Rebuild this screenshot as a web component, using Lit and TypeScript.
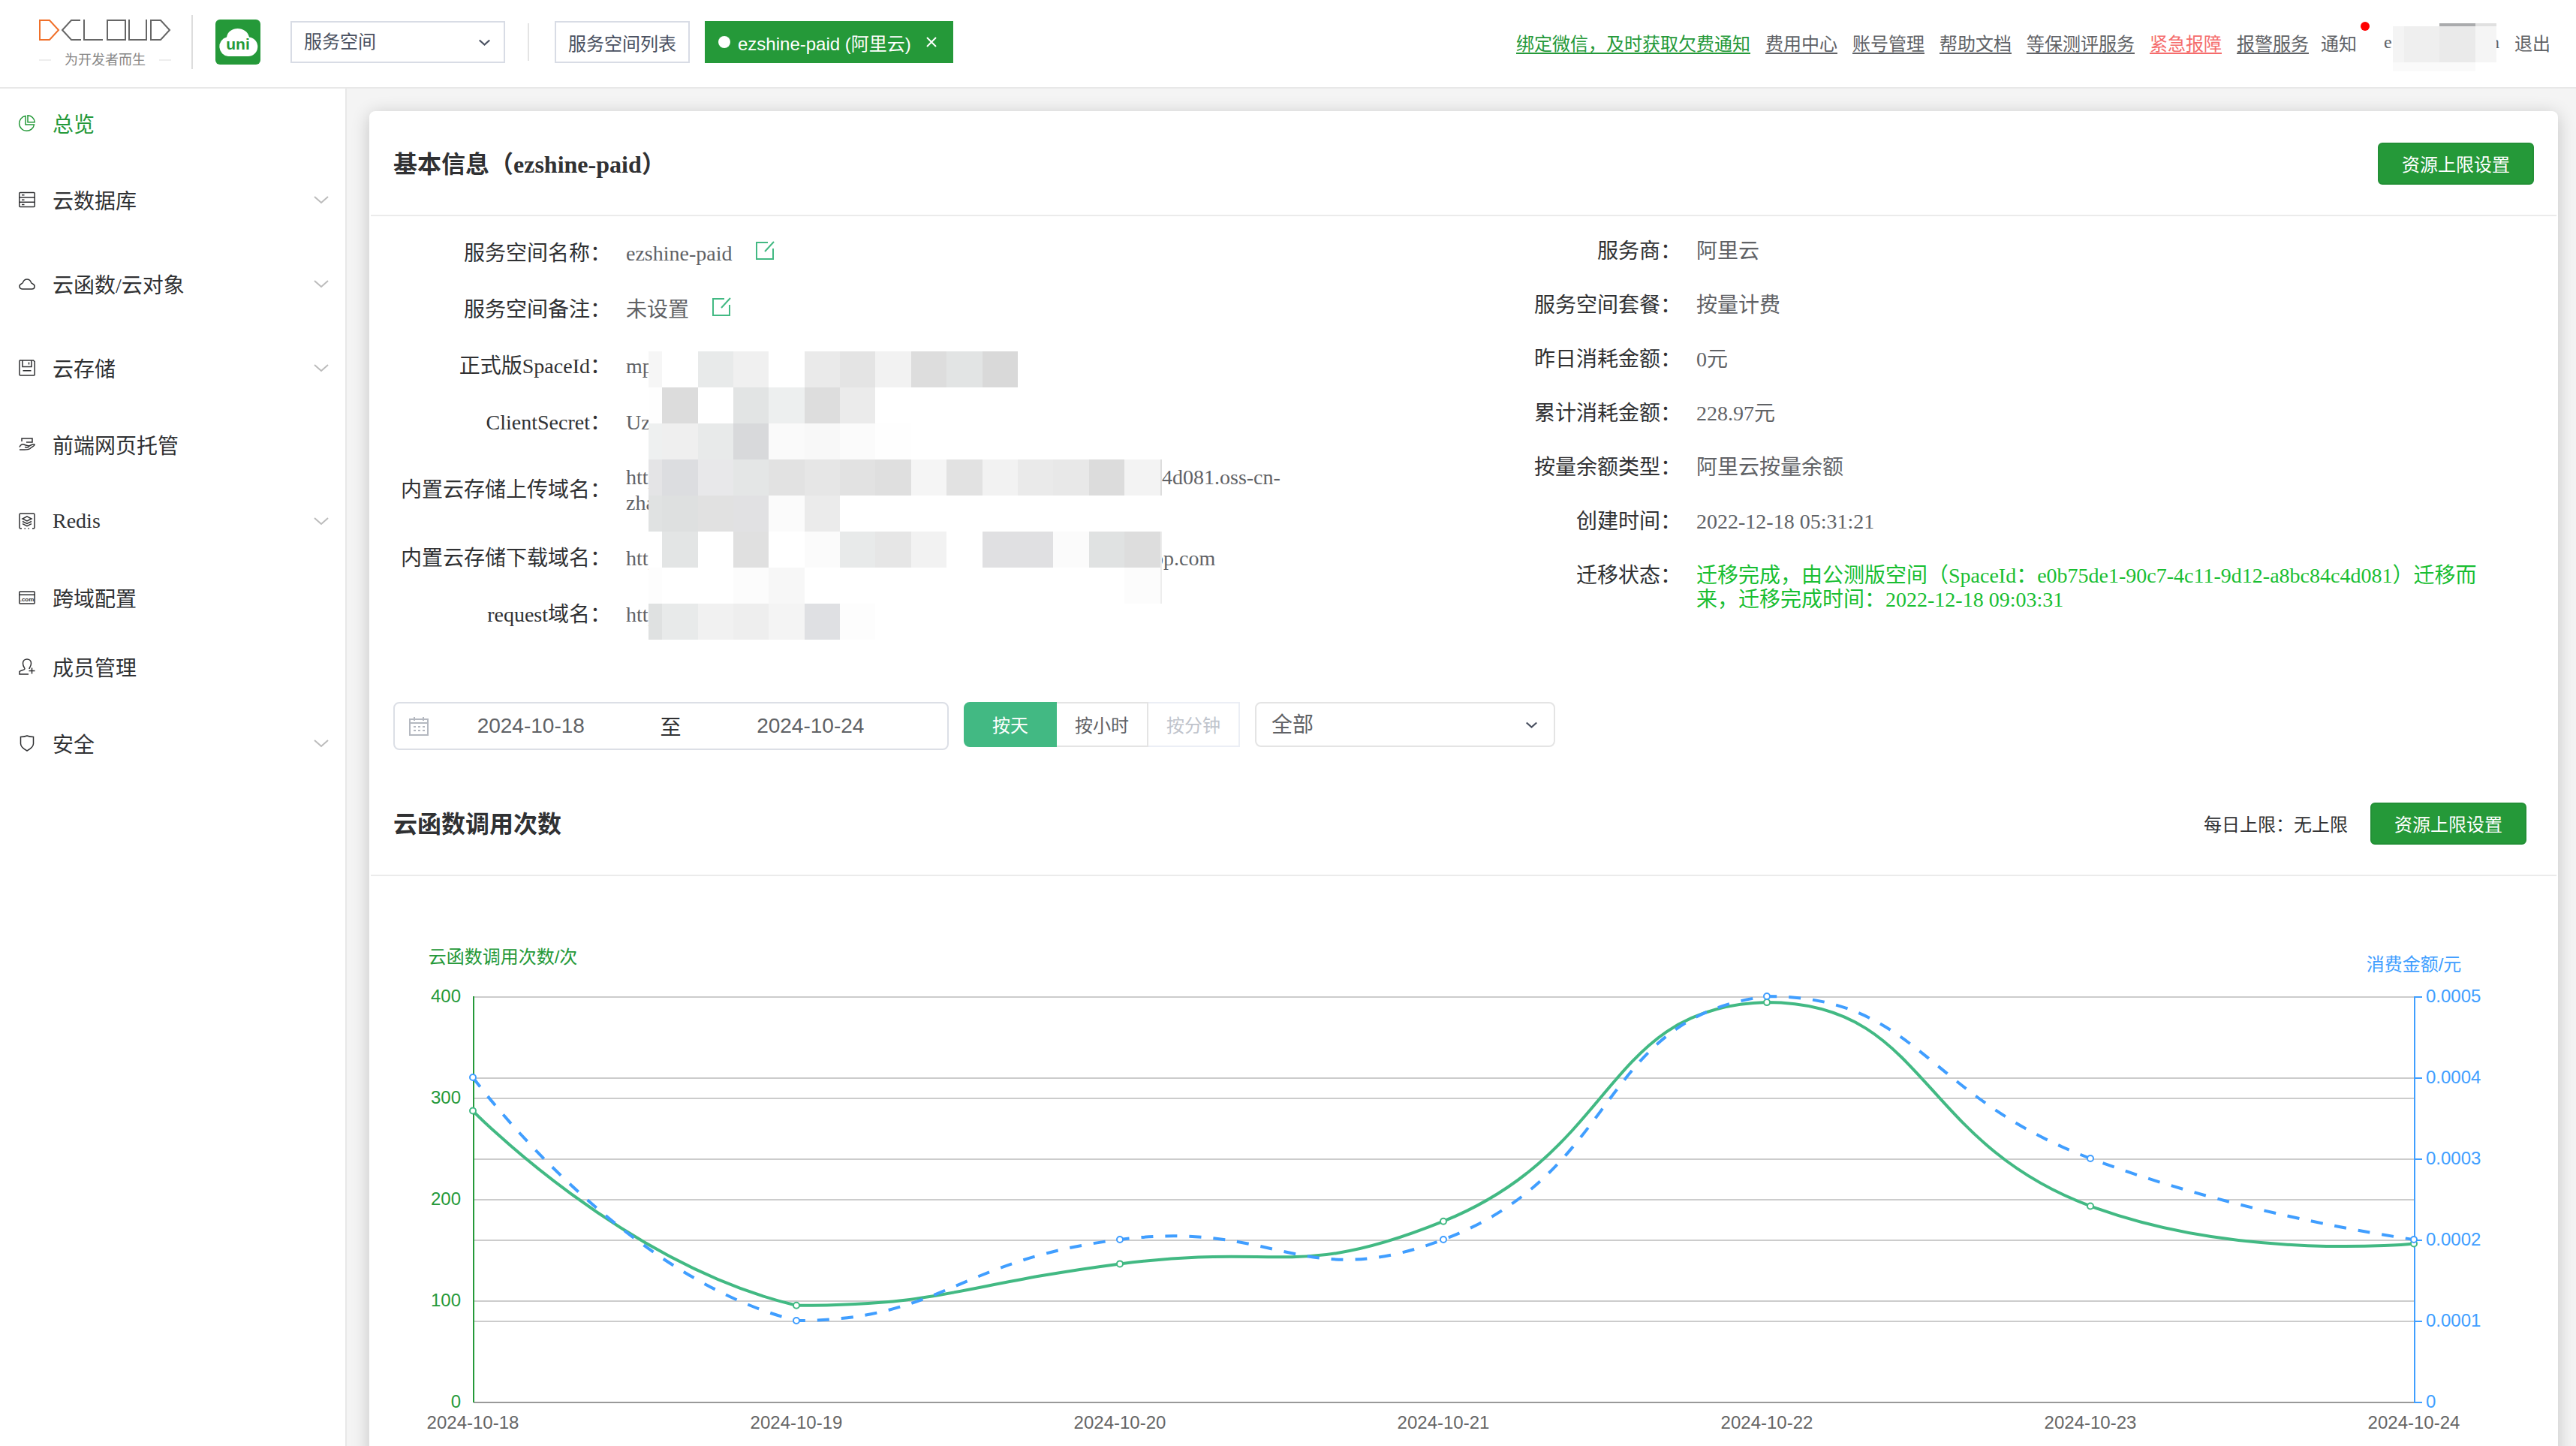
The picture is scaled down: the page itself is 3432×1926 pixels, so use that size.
import { LitElement, html, svg, css, nothing, type TemplateResult } from "lit";
import { customElement, state } from "lit/decorators.js";
import { classMap } from "lit/directives/class-map.js";
import { styleMap } from "lit/directives/style-map.js";

/* ---------- icons ---------- */

const icons: Record<string, TemplateResult> = {
  overview: svg`<path d="M9 1.500A10 10 0 1 0 20.500 13H9z"/><path d="M12 .8v9h9.200A9.300 9.300 0 0 0 12 .8z"/>`,
  database: svg`<rect x=".8" y="1.500" width="20.400" height="19" rx="1"/><path d="M1 8h20M1 14.300h20M4 4.800h3.500M4 11.200h3.500M4 17.500h3.500"/>`,
  cloud: svg`<path d="M5 18h12.500c4.300 0 4.800-5.300 1-7-.8-.5-1.500-.7-2-1.700-2-5.600-9-5.600-11 0-.4 1-1.200 1.200-2 1.700-3.700 1.700-3.200 7 1.500 7z"/>`,
  storage: svg`<path d="M2.500 1h17l1.700 1.700V20a1 1 0 0 1-1 1H2a1 1 0 0 1-1-1V2a1 1 0 0 1 1.500-1z"/><path d="M5 1v8.500h12V1M13.500 3.500v3M5.500 14.700h11"/>`,
  hosting: svg`<path d="M4 7V3h14v5h-8"/><path d="M1 14.500c1.500-4 4.500-4.500 7-3 2.500 1.500 6 .3 5.500 2.300-.8 1.700-3.500 1.200-5.500.8M14 13c3-1.300 5-3 7-2 .5 2-4 3.500-6 5.500-3 2.300-7 1.200-14 1.500"/>`,
  redis: svg`<path d="M4 21H2.500A1.500 1.500 0 0 1 1 19.500v-17A1.500 1.500 0 0 1 2.500 1h17A1.500 1.500 0 0 1 21 2.500v17a1.500 1.500 0 0 1-1.500 1.500H18M7.500 21h1.500M12.500 21h1.500"/><path d="M11 4.800 17 8l-6 3-6-3zM5 11.500l6 3 6-3M5 14.700l6 3 6-3"/>`,
  domain: svg`<rect x=".8" y="3" width="20.400" height="16" rx="1"/><path d="M1 7.200h20"/><text class="glyph" x="11" y="15.500">.com</text>`,
  member: svg`<path d="M13 21H1v-3.500c1.500-2 6-1.500 7-3.500.5-1-2.500-3-2.500-7.500 0-7.500 11-7.500 11 0 0 4-2.500 5.500-2.500 7.500M17.500 12.500v8M13.500 16.500h8"/>`,
  shield: svg`<path d="M11 1c3 1.300 5.500 1.500 8.500 1.500v9c0 4.500-4 7-8.500 9.500-4.500-2.500-8.500-5-8.500-9.500v-9C5.500 2.500 8 2.300 11 1z"/>`,
};

const icon = (name: string) =>
  html`<svg class="icon" viewBox="0 0 22 22" aria-hidden="true">${icons[name]}</svg>`;

const chevron = (cls: string) =>
  html`<svg class=${cls} viewBox="0 0 20 12" aria-hidden="true"><path d="M1 2l9 8 9-8" /></svg>`;

const brandLogo = html`<svg class="logo-mark" viewBox="0 0 176 28" role="img" aria-label="DCLOUD">
  <path class="accent" d="M1 1h13l12 13-12 13H1z" />
  <path d="M55 1H43L31 14l12 13h13M60 0v27h25M91 1h24v26H91zM120 0v27h23V0M149 1h13l12 13-12 13h-13z" />
</svg>`;

const uniLogo = html`<svg class="uni" viewBox="0 0 60 60" role="img" aria-label="uniCloud">
  <rect width="60" height="60" rx="6" />
  <path d="M17 49a13 13 0 0 1-2-25.500C17 8 42 8 45 23.500A12.800 12.800 0 0 1 43 49z" />
  <text x="30" y="40">uni</text>
</svg>`;

/* ---------- call-count chart ---------- */

interface Series {
  name: string;
  max: number;
  values: number[];
}

@customElement("calls-chart")
class CallsChart extends LitElement {
  @state() private width = 2912;

  private observer?: ResizeObserver;

  static styles = css`
    :host { display: block; height: 780px; overflow: hidden; }
    svg { display: block; }
    text { font: 24px "Liberation Sans", "Noto Sans CJK SC", sans-serif; }
    .grid { stroke: #ccc; stroke-width: 2; }
    .base { stroke: #999; stroke-width: 2; }
    .day { fill: #666; text-anchor: middle; }
    .left { fill: #259939; text-anchor: end; }
    .right { fill: #409eff; }
    .name { text-anchor: middle; }
    .axis-left { stroke: #259939; stroke-width: 2; }
    .axis-right { stroke: #409eff; stroke-width: 2; }
    .line { fill: none; stroke-width: 4; }
    .calls { stroke: #42b983; }
    .cost { stroke: #409eff; }
    .dashed { stroke-dasharray: 16 16; }
    .dot { fill: #fff; stroke-width: 2; }
  `;

  private days = [18, 19, 20, 21, 22, 23, 24].map((d) => `2024-10-${d}`);
  private calls: Series = { name: "云函数调用次数/次", max: 400, values: [287, 95, 136, 178, 394, 193, 156] };
  private cost: Series = { name: "消费金额/元", max: 5, values: [4, 1, 2, 2, 5, 3, 2] };

  connectedCallback() {
    super.connectedCallback();
    this.observer = new ResizeObserver(([entry]) => {
      this.width = Math.round(entry.contentRect.width);
    });
    this.observer.observe(this);
  }

  disconnectedCallback() {
    this.observer?.disconnect();
    super.disconnectedCallback();
  }

  /* Bezier smoothing with control points kept inside the bounds of the series. */
  private smooth(pts: number[][]): string {
    const xs = pts.map((p) => p[0]);
    const ys = pts.map((p) => p[1]);
    const clamp = ([x, y]: number[]) => [
      Math.min(Math.max(x, Math.min(...xs)), Math.max(...xs)),
      Math.min(Math.max(y, Math.min(...ys)), Math.max(...ys)),
    ];
    let d = `M${pts[0].join(" ")}`;
    let c0 = pts[0];
    for (let i = 1; i < pts.length; i++) {
      const p = pts[i];
      const prev = pts[i - 1];
      const next = pts[i + 1];
      let c1 = p;
      let following = p;
      if (next) {
        const v = [next[0] - prev[0], next[1] - prev[1]];
        const before = Math.hypot(p[0] - prev[0], p[1] - prev[1]);
        const after = Math.hypot(next[0] - p[0], next[1] - p[1]);
        const ratio = after / (after + before);
        c1 = clamp([p[0] - v[0] * 0.5 * (1 - ratio), p[1] - v[1] * 0.5 * (1 - ratio)]);
        following = clamp([p[0] + v[0] * 0.5 * ratio, p[1] + v[1] * 0.5 * ratio]);
      }
      d += `C${[...c0, ...c1, ...p].join(" ")}`;
      c0 = following;
    }
    return d;
  }

  render() {
    const left = 136;
    const right = this.width - 190;
    const top = 160;
    const height = 540;
    const bottom = top + height;
    const x = (i: number) => left + ((right - left) * i) / (this.days.length - 1);
    const y = (v: number, max: number) => bottom - (v / max) * height;
    const points = (s: Series) => s.values.map((v, i) => [x(i), y(v, s.max)]);
    const calls = points(this.calls);
    const cost = points(this.cost);
    const leftTicks = [0, 100, 200, 300, 400];
    const rightTicks = [0, 1, 2, 3, 4, 5];

    return html`<svg width=${this.width} height="780" role="img" aria-label="云函数调用次数">
      <g transform="translate(1 1)">
        ${leftTicks.slice(1).map((t) => svg`<line class="grid" x1=${left} x2=${right} y1=${y(t, 400)} y2=${y(t, 400)} />`)}
        ${rightTicks.slice(1, 5).map((t) => svg`<line class="grid" x1=${left} x2=${right} y1=${y(t, 5)} y2=${y(t, 5)} />`)}
        <line class="base" x1=${left} x2=${right} y1=${bottom} y2=${bottom} />
        <line class="axis-left" x1=${left} x2=${left} y1=${top - 1} y2=${bottom} />
        <line class="axis-right" x1=${right} x2=${right} y1=${top - 1} y2=${bottom + 1} />
        ${rightTicks.map((t) => svg`<line class="axis-right" x1=${right} x2=${right + 10} y1=${y(t, 5)} y2=${y(t, 5)} />`)}
      </g>
      ${leftTicks.map((t) => svg`<text class="left" x=${left - 16} y=${y(t, 400) + 8}>${t}</text>`)}
      ${rightTicks.map((t) => svg`<text class="right" x=${right + 16} y=${y(t, 5) + 8}>${t ? `0.000${t}` : "0"}</text>`)}
      ${this.days.map((d, i) => svg`<text class="day" x=${x(i)} y=${bottom + 36}>${d}</text>`)}
      <text class="left name" x=${left + 40} y=${top - 44}>${this.calls.name}</text>
      <text class="right name" x=${right} y=${top - 34}>${this.cost.name}</text>
      <path class="line calls" d=${this.smooth(calls)} />
      ${calls.map((p) => svg`<circle class="dot calls" cx=${p[0]} cy=${p[1]} r="4" />`)}
      <path class="line cost dashed" d=${this.smooth(cost)} />
      ${cost.map((p) => svg`<circle class="dot cost" cx=${p[0]} cy=${p[1]} r="4" />`)}
    </svg>`;
  }
}

/* ---------- page ---------- */

interface MenuItem {
  label: string;
  icon: string;
  open?: boolean;
  active?: boolean;
}

const menu: MenuItem[] = [
  { label: "总览", icon: "overview", active: true },
  { label: "云数据库", icon: "database", open: true },
  { label: "云函数/云对象", icon: "cloud", open: true },
  { label: "云存储", icon: "storage", open: true },
  { label: "前端网页托管", icon: "hosting" },
  { label: "Redis", icon: "redis", open: true },
  { label: "跨域配置", icon: "domain" },
  { label: "成员管理", icon: "member" },
  { label: "安全", icon: "shield", open: true },
];

const links = [
  { label: "绑定微信，及时获取欠费通知", tone: "good" },
  { label: "费用中心", tone: "" },
  { label: "账号管理", tone: "" },
  { label: "帮助文档", tone: "" },
  { label: "等保测评服务", tone: "" },
  { label: "紧急报障", tone: "alert" },
  { label: "报警服务", tone: "" },
];

const details = [
  ["服务商", "阿里云"],
  ["服务空间套餐", "按量计费"],
  ["昨日消耗金额", "0元"],
  ["累计消耗金额", "228.97元"],
  ["按量余额类型", "阿里云按量余额"],
  ["创建时间", "2022-12-18 05:31:21"],
];

/* Mosaic blocks that hide private values: column edges, then one colour list per row. */
const maskEdges = [0, 18, 66, 113, 160, 208, 255, 302, 350, 397, 445, 492, 539, 587, 634, 682, 684];
const maskRows = [
  "f6f6f6 ffffff e8eaea f0f0f0 ffffff eaeaea e4e4e4 f2f2f2 dddddd e2e4e4 d9d9d9",
  "fefefe dcdcdc ffffff e2e4e4 edefef dddddd ebebeb",
  "eef0f0 efefef e8eaea d8d9db fafafa f8f8f8 fbfbfb fefefe",
  "e4e4e6 dcdde0 e8e8ea e4e6e6 e2e2e2 e6e6e6 e2e2e2 dfdfdf f5f5f5 e2e2e2 f2f2f2 eaeaea e8e8e8 dcdcdc f3f3f3 dddddd",
  "e0e2e2 dee0e0 e1e1e1 e1e1e3 fbfbfb ebebeb",
  "ffffff e3e5e5 ffffff e0e0e0 ffffff fbfbfb e8eaea e6e6e6 f2f2f2 ffffff e0e0e2 e0e0e2 fbfbfb e0e2e2 dddddd ececec",
  "fdfdfd ffffff ffffff fcfcfc f7f7f7 ffffff ffffff ffffff ffffff ffffff ffffff ffffff ffffff ffffff fcfcfc ededed",
  "dfe1e1 e8eaea f1f1f1 eeeeee f4f4f4 dfe0e3 fdfdfd",
].map((row) => row.split(" "));

@customElement("app-root")
class AppRoot extends LitElement {
  @state() private unit = "按天";

  static styles = css`
    :host {
      display: flex; flex-direction: column; height: 100vh; overflow: hidden;
      background: #f4f4f4; color: #303133;
      font-family: "Liberation Serif", "Noto Sans CJK SC", serif; font-size: 28px;
    }
    * { box-sizing: border-box; }
    button, input, select { font: inherit; color: inherit; margin: 0; }
    button { cursor: pointer; }
    a { color: inherit; text-decoration: none; }

    .top { display: flex; align-items: center; flex: none; height: 118px; padding: 0 34px 4px 52px; background: #fff; border-bottom: 2px solid #e8e8e8; font-size: 24px; color: #606266; }
    .brand { display: flex; flex-direction: column; align-items: center; gap: 16px; width: 176px; padding-top: 4px; }
    .logo-mark { width: 176px; height: 28px; fill: none; stroke: #666; stroke-width: 2; }
    .logo-mark .accent { stroke: #f0702a; }
    .slogan { display: flex; align-items: center; justify-content: space-between; width: 100%; font-size: 18px; line-height: 20px; color: #888; }
    .slogan::before, .slogan::after { content: ""; width: 16px; height: 2px; background: #eee; }
    .bar { width: 2px; height: 72px; margin: 0 30px 0 27px; background: #ddd; }
    .uni { width: 60px; height: 60px; margin-right: 40px; fill: #fff; }
    .uni rect { fill: #259939; }
    .uni text { fill: #259939; font: bold 21px "Liberation Sans", sans-serif; text-anchor: middle; }
    .pick { position: relative; display: flex; align-items: center; }
    .pick select { appearance: none; width: 100%; height: 100%; padding: 0 16px; border: 2px solid #d8dce5; background: #fff; color: #495060; }
    .pick.space { width: 286px; height: 56px; }
    .tick { position: absolute; right: 20px; width: 15px; height: 9px; fill: none; stroke: #495060; stroke-width: 3; pointer-events: none; }
    .thin { width: 2px; height: 50px; margin: 0 34px 0 30px; background: #e4e4e4; }
    .tabs { display: flex; gap: 20px; font-family: "Liberation Sans", "Noto Sans CJK SC", sans-serif; }
    .tab { display: flex; align-items: center; height: 56px; padding: 0 16px; border: 2px solid #d8dce5; background: #fff; color: #495060; }
    .tab.on { gap: 10px; border-color: #259939; background: #259939; color: #fff; }
    .tab.on::before { content: ""; width: 16px; height: 16px; border-radius: 8px; background: #fff; }
    .close { width: 14px; height: 14px; margin: 0 4px 0 10px; fill: none; stroke: #fff; stroke-width: 2; }
    .links { display: flex; align-items: center; gap: 20px; margin-left: auto; }
    .links .line { text-decoration: underline; text-decoration-thickness: 2px; text-underline-offset: 3px; }
    .good { color: #259939; }
    .alert { color: #f56c6c; }
    .notice { position: relative; margin: 0 16px 0 -4px; }
    .notice::after { content: ""; position: absolute; top: -10px; right: -17px; width: 12px; height: 12px; border-radius: 6px; background: #f00; }
    .user { position: relative; display: flex; justify-content: space-between; width: 154px; }
    .user svg { position: absolute; left: 12px; top: -12px; width: 138px; height: 64px; }

    .body { display: flex; flex: 1; min-height: 0; }
    .side { flex: none; width: 462px; background: #fff; border-right: 2px solid #e8e8e8; }
    .side ul { list-style: none; margin: 0; padding: 0; }
    .side a { display: flex; align-items: center; gap: 23px; height: 92px; padding: 0 22px 0 25px; }
    .side a.sub { height: 112px; }
    .side a.active { color: #259939; }
    .icon { width: 22px; height: 22px; overflow: visible; fill: none; stroke: currentColor; stroke-width: 1.500; }
    .icon .glyph { font: bold 8px "Liberation Sans", sans-serif; fill: currentColor; stroke: none; text-anchor: middle; }
    .arrow { width: 20px; height: 12px; margin-left: auto; fill: none; stroke: #bbb; stroke-width: 2; }

    .main { flex: 1; min-width: 0; padding: 30px 24px 0 30px; overflow-y: auto; scrollbar-width: none; }
    .card { padding: 0 2px; border-radius: 8px; background: #fff; box-shadow: 0 4px 24px rgba(0, 0, 0, .2); }
    .head { display: flex; align-items: center; height: 140px; padding: 2px 30px 0; border-bottom: 2px solid #ebebeb; }
    .head h2 { margin: 0 auto 0 0; padding-bottom: 4px; font-size: 32px; font-weight: bold; }
    .head.second { margin-top: 28px; padding-right: 40px; }
    .limit { margin-right: 30px; padding-bottom: 2px; font-size: 24px; }
    .primary { height: 56px; padding: 0 30px 2px; border: 2px solid #239036; border-radius: 6px; background: #259939; color: #fff; font-size: 24px; }

    .info { display: grid; grid-template-columns: 1fr 1fr; align-items: start; }
    .left, .right { position: relative; margin: 0; }
    .left { padding-top: 12px; }
    .right { padding-top: 11px; }
    .row { display: grid; grid-template-columns: 320px 1fr; column-gap: 20px; align-items: center; min-height: 75px; padding: 19px 0; line-height: 34px; }
    .right .row { grid-template-columns: 290px 1fr; align-items: start; min-height: 72px; padding: 20px 92px 20px 0; line-height: 32px; }
    dt { text-align: right; }
    dd { margin: 0; color: #606266; }
    .right dd.done { color: #19be32; }
    .named { display: flex; align-items: flex-start; gap: 30px; }
    .edit { width: 26px; height: 26px; padding: 0; border: 0; background: none; }
    .edit svg { display: block; width: 26px; height: 26px; fill: none; stroke: #42b983; stroke-width: 2; }
    .hidden { display: inline-block; width: 714px; }
    .hidden.short { display: inline-flex; justify-content: space-between; width: 716px; }
    .mask { position: absolute; left: 370px; top: 180px; width: 684px; height: 384px; }

    .filters { display: flex; align-items: flex-start; gap: 20px; margin-top: 79px; padding: 0 30px; }
    .range { display: flex; align-items: center; width: 740px; height: 64px; padding: 0 46px 0 19px; border: 2px solid #dcdfe6; border-radius: 8px; }
    .range input { flex: 1; min-width: 0; height: 100%; padding: 0; border: 0; background: none; text-align: center; color: #606266; font-family: "Liberation Sans", sans-serif; outline: none; }
    .range span { width: 100px; text-align: center; }
    .cal { width: 26px; height: 26px; fill: none; stroke: #b4b8c0; stroke-width: 2; }
    .units { display: flex; width: 368px; height: 60px; font-size: 24px; color: #606266; }
    .units button { flex: 1; padding: 0 0 2px; border: 2px solid #e4e4e4; border-left-width: 0; background: #fff; }
    .units button:first-child { flex: 0 0 124px; border-left-width: 2px; border-radius: 8px 0 0 8px; }
    .units button.on { border-color: #42b983; background: #42b983; color: #fff; }
    .units button:disabled { border-color: #ebeef5; color: #c0c4cc; cursor: default; }
    .pick.scope { width: 400px; height: 60px; color: #606266; }
    .pick.scope select { padding: 0 20px; border-color: #e4e4e4; border-radius: 8px; color: #606266; }
    .pick.scope .tick { right: 24px; }
  `;

  private editButton(label: string) {
    return html`<button class="edit" aria-label=${label}>
      <svg viewBox="0 0 26 26" aria-hidden="true"><path d="M17 2H2v22h22V10M25 1 13 14" /></svg>
    </button>`;
  }

  private mask() {
    return html`<svg class="mask" viewBox="0 0 684 384" aria-hidden="true" shape-rendering="crispEdges">
      ${maskRows.map((row, r) =>
        row.map(
          (c, i) => svg`<rect x=${maskEdges[i]} y=${r * 48} width=${maskEdges[i + 1] - maskEdges[i]} height="48"
            style=${styleMap({ fill: `#${c}` })} />`
        )
      )}
    </svg>`;
  }

  private row(label: string, value: unknown) {
    return html`<div class="row"><dt>${label}：</dt>${value}</div>`;
  }

  private header() {
    return html`<header class="top">
      <a class="brand" href="#home">${brandLogo}<span class="slogan">为开发者而生</span></a>
      <span class="bar"></span>
      ${uniLogo}
      <div class="pick space">
        <select aria-label="服务空间"><option>服务空间</option></select>
        ${chevron("tick")}
      </div>
      <span class="thin"></span>
      <nav class="tabs">
        <a class="tab" href="#spaces">服务空间列表</a>
        <a class="tab on" href="#space">ezshine-paid (阿里云)
          <svg class="close" viewBox="0 0 14 14" aria-hidden="true"><path d="M1 1l12 12M13 1 1 13" /></svg>
        </a>
      </nav>
      <nav class="links">
        ${links.map((l) => html`<a class="line ${l.tone}" href="#link">${l.label}</a>`)}
        <a class="notice" href="#notice">通知</a>
        <span class="user"><span>e</span><span>n</span>
          <svg viewBox="0 0 138 64" aria-hidden="true" shape-rendering="crispEdges">
            <rect y="4" width="15" height="48" fill="#f4f4f4" /><rect x="15" y="4" width="47" height="48" fill="#efefef" />
            <rect x="62" y="4" width="48" height="48" fill="#eaeaea" /><rect x="110" y="4" width="28" height="48" fill="#f5f5f5" />
            <rect x="62" width="48" height="4" fill="#aaabad" /><rect x="110" width="28" height="4" fill="#e0e0e0" />
            <rect y="52" width="110" height="12" fill="#fafafa" />
          </svg>
        </span>
        <a href="#logout">退出</a>
      </nav>
    </header>`;
  }

  private sidebar() {
    return html`<nav class="side"><ul>
      ${menu.map(
        (m) => html`<li>
          <a href="#menu" class=${classMap({ active: !!m.active, sub: !!m.open })}>
            ${icon(m.icon)}<span>${m.label}</span>${m.open ? chevron("arrow") : nothing}
          </a>
        </li>`
      )}
    </ul></nav>`;
  }

  private info() {
    return html`<div class="info">
      <dl class="left">
        ${this.row("服务空间名称", html`<dd class="named">ezshine-paid ${this.editButton("修改名称")}</dd>`)}
        ${this.row("服务空间备注", html`<dd class="named">未设置 ${this.editButton("修改备注")}</dd>`)}
        ${this.row("正式版SpaceId", html`<dd>mp</dd>`)}
        ${this.row("ClientSecret", html`<dd>Uz</dd>`)}
        ${this.row("内置云存储上传域名", html`<dd><span class="hidden">http</span>4d081.oss-cn-<br />zha</dd>`)}
        ${this.row("内置云存储下载域名", html`<dd><span class="hidden short"><span>http</span><span>p</span></span>p.com</dd>`)}
        ${this.row("request域名", html`<dd>http</dd>`)}
        ${this.mask()}
      </dl>
      <dl class="right">
        ${details.map(([k, v]) => this.row(k, html`<dd>${v}</dd>`))}
        ${this.row(
          "迁移状态",
          html`<dd class="done">迁移完成，由公测版空间（SpaceId：e0b75de1-90c7-4c11-9d12-a8bc84c4d081）迁移而来，迁移完成时间：2022-12-18 09:03:31</dd>`
        )}
      </dl>
    </div>`;
  }

  private filters() {
    return html`<div class="filters">
      <div class="range">
        <svg class="cal" viewBox="0 0 26 26" aria-hidden="true">
          <path d="M1 4h24v21H1zM1 9h24M7 1v5M19 1v5M6 14h3M12 14h3M18 14h3M6 19h3M12 19h3M18 19h3" />
        </svg>
        <input aria-label="开始日期" .value=${"2024-10-18"} />
        <span>至</span>
        <input aria-label="结束日期" .value=${"2024-10-24"} />
      </div>
      <div class="units">
        ${["按天", "按小时", "按分钟"].map(
          (u) => html`<button class=${classMap({ on: this.unit === u })} ?disabled=${u === "按分钟"}
            @click=${() => (this.unit = u)}>${u}</button>`
        )}
      </div>
      <div class="pick scope">
        <select aria-label="范围"><option>全部</option></select>
        ${chevron("tick")}
      </div>
    </div>`;
  }

  render() {
    return html`${this.header()}
      <div class="body">
        ${this.sidebar()}
        <main class="main">
          <section class="card">
            <div class="head">
              <h2>基本信息（ezshine-paid）</h2>
              <button class="primary">资源上限设置</button>
            </div>
            ${this.info()} ${this.filters()}
            <div class="head second">
              <h2>云函数调用次数</h2>
              <span class="limit">每日上限：无上限</span>
              <button class="primary">资源上限设置</button>
            </div>
            <calls-chart></calls-chart>
          </section>
        </main>
      </div>`;
  }
}
